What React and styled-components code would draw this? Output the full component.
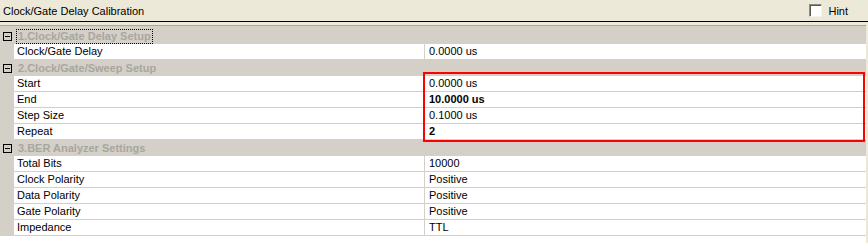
import React from 'react'
import styled, { createGlobalStyle } from 'styled-components';

const Global = createGlobalStyle`
html, body {
  margin: 0;
  padding: 0;
  background: #ECE9D8;
}
body {
  font-family: "Liberation Sans", Arial, sans-serif;
  font-size: 11px;
  color: #000;
}
`

const Page = styled.div`
width: 868px;
height: 243px;
display: flex;
flex-direction: column;
background: #ECE9D8;
overflow: hidden;
`
const TitleBar = styled.div`
height: 21px;
display: flex;
align-items: center;
justify-content: space-between;
padding: 0 20px 0 3px;
border-bottom: 1px solid #000;
`
const Title = styled.span`
font-size: 11px;
`
const HintLabel = styled.label`
display: flex;
align-items: center;
gap: 6px;
font-size: 11px;
`
const CheckBox = styled.span`
width: 11px;
height: 11px;
background: #fff;
border: 1px solid;
border-color: #8a8a84 #f4f3ee #f4f3ee #8a8a84;
box-shadow: inset 1px 1px 0 #5a5a55;
margin-top: -1px;
`
const Grid = styled.div`
position: relative;
margin-top: 3px;
width: 866px;
flex: 1;
background: #fff;
border-top: 1px solid #aca899;
padding-top: 2px;
background-image: linear-gradient(#D4D0C8, #D4D0C8);
background-repeat: no-repeat;
background-size: 100% 2px;
`
const Category = styled.div`
height: 16px;
display: flex;
align-items: center;
background: #D4D0C8;
`
const Toggle = styled.svg`
width: 9px;
height: 9px;
margin: 0 3px 0 3px;
flex: none;
`
const CatText = styled.span`
font-weight: bold;
font-size: 11px;
color: #a8a6a0;
line-height: 13px;
padding: 0 1px;
margin-left: 1px;
border: 1px dotted ${({ $focus }) => ($focus ? '#000' : 'transparent')};
`
const Row = styled.div`
height: 16px;
display: grid;
grid-template-columns: 14px 410px 1px 1fr;
background: #fff;
`
const Margin = styled.div`
background: #D4D0C8;
`
const Cell = styled.div`
line-height: 15px;
border-bottom: 1px solid #D4D0C8;
padding-left: ${({ $pad }) => $pad}px;
font-weight: ${({ $bold }) => ($bold ? 'bold' : 'normal')};
white-space: nowrap;
`
const Divider = styled.div`
background: #D4D0C8;
`
const Highlight = styled.div`
position: absolute;
left: 423px;
top: 46px;
width: 438px;
height: 66px;
border: 2px solid #ff0000;
pointer-events: none;
`

const sections = [
  {
    title: '1.Clock/Gate Delay Setup',
    focus: true,
    rows: [['Clock/Gate Delay', '0.0000 us']],
  },
  {
    title: '2.Clock/Gate/Sweep Setup',
    rows: [
      ['Start', '0.0000 us'],
      ['End', '10.0000 us', true],
      ['Step Size', '0.1000 us'],
      ['Repeat', '2', true],
    ],
  },
  {
    title: '3.BER Analyzer Settings',
    rows: [
      ['Total Bits', '10000'],
      ['Clock Polarity', 'Positive'],
      ['Data Polarity', 'Positive'],
      ['Gate Polarity', 'Positive'],
      ['Impedance', 'TTL'],
    ],
  },
]

const Minus = () => (
  <Toggle viewBox="0 0 9 9">
    <rect x="0.5" y="0.5" width="8" height="8" fill="none" stroke="#000" />
    <line x1="2" y1="4.5" x2="7" y2="4.5" stroke="#000" />
  </Toggle>
)

const App = () => {
  return (
    <Page>
      <Global />
      <TitleBar>
        <Title>Clock/Gate Delay Calibration</Title>
        <HintLabel>
          <CheckBox />
          Hint
        </HintLabel>
      </TitleBar>
      <Grid>
        {sections.map((s) => (
          <React.Fragment key={s.title}>
            <Category>
              <Minus />
              <CatText $focus={s.focus}>{s.title}</CatText>
            </Category>
            {s.rows.map(([label, value, bold]) => (
              <Row key={label}>
                <Margin />
                <Cell $pad={3}>{label}</Cell>
                <Divider />
                <Cell $pad={4} $bold={bold}>{value}</Cell>
              </Row>
            ))}
          </React.Fragment>
        ))}
        <Highlight />
      </Grid>
    </Page>
  )
}

export default App
